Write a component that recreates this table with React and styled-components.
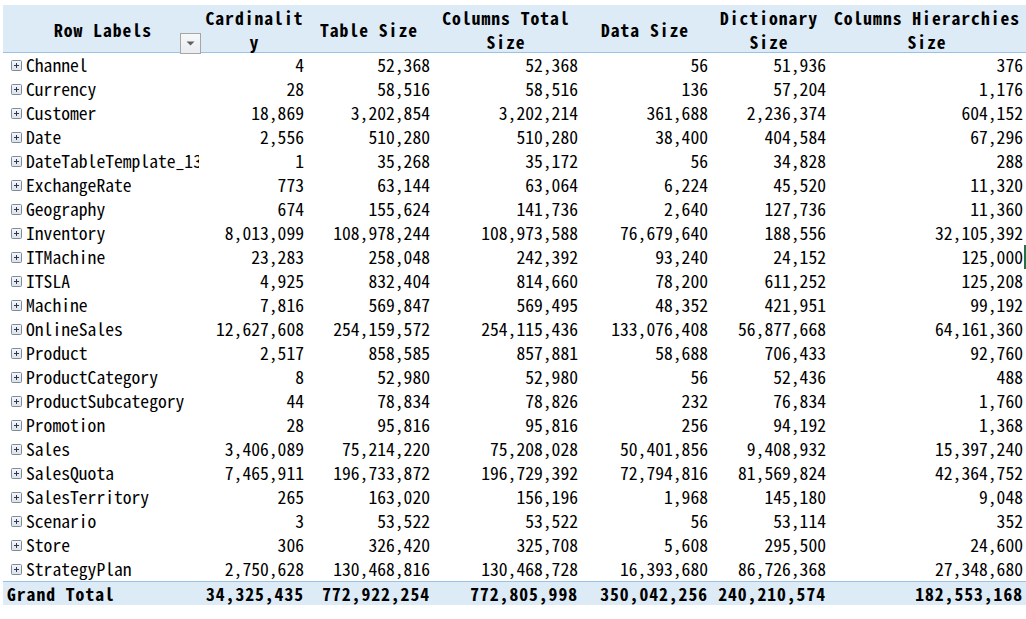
import React from "react";
import styled, { createGlobalStyle } from "styled-components";

const GlobalStyle = createGlobalStyle`
  html, body { margin: 0; padding: 0; background: #ffffff; }
  body {
    font-family: "Noto Sans Mono CJK SC", "Liberation Mono", monospace;
    font-size: 17.6px;
    color: #000000;
  }
`;

const COLS = "200px 103px 126px 148px 130px 118px 198px";

const Sheet = styled.div`
  padding: 5px 0 0 3px;
  width: 1023px;
`;

const HeaderRow = styled.div`
  display: grid;
  grid-template-columns: ${COLS};
  height: 47px;
  background: #ddebf7;
  border-bottom: 1px solid #9bc2e6;
  font-weight: bold;
  letter-spacing: 1px;
`;

const HeaderCell = styled.div`
  position: relative;
  display: flex;
  align-items: center;
  justify-content: center;
  text-align: center;
  padding-top: 1px;
  line-height: 24px;
  white-space: pre-line;
  overflow: visible;
`;

const FilterButton = styled.div`
  position: absolute;
  right: 2px;
  bottom: 0px;
  width: 19px;
  height: 19px;
  border: 1px solid #a6a6a6;
  background: linear-gradient(#f7f8fa, #e9ecf0);
  display: flex;
  align-items: center;
  justify-content: center;
`;

const Row = styled.div`
  display: grid;
  grid-template-columns: ${COLS};
  height: ${(p) => (p.$total ? "23px" : "24px")};
  line-height: ${(p) => (p.$total ? "23px" : "24px")};
  background: ${(p) => (p.$total ? "#ddebf7" : "#ffffff")};
  border-top: ${(p) => (p.$total ? "1px solid #9bc2e6" : "none")};
  font-weight: ${(p) => (p.$total ? "bold" : "normal")};
  letter-spacing: ${(p) => (p.$total ? "1px" : "0")};
`;

const LabelCell = styled.div`
  display: flex;
  align-items: center;
  gap: 4px;
  padding-left: ${(p) => (p.$total ? "4px" : "8px")};
  padding-right: 4px;
  white-space: nowrap;
  min-width: 0;
`;

const LabelText = styled.span`
  overflow: hidden;
  min-width: 0;
  white-space: nowrap;
`;

const NumCell = styled.div`
  text-align: right;
  padding-right: ${(p) => (p.$last ? "3px" : "2px")};
  white-space: nowrap;
  box-shadow: ${(p) => (p.$active ? "inset -2px 0 0 #217346" : "none")};
`;

const ExpandIcon = () => (
  <svg width="11" height="11" viewBox="0 0 11 11" style={{ flex: "none" }}>
    <defs>
      <linearGradient id="eg" x1="0" y1="0" x2="0" y2="1">
        <stop offset="0" stopColor="#f4f6f9" />
        <stop offset="1" stopColor="#dde2ea" />
      </linearGradient>
    </defs>
    <rect x="0.5" y="0.5" width="10" height="10" rx="1" fill="url(#eg)" stroke="#7f8a9c" />
    <path d="M3 5.5h5M5.5 3v5" stroke="#2f3b4c" strokeWidth="1" />
  </svg>
);

const Arrow = () => (
  <svg width="9" height="5" viewBox="0 0 9 5">
    <path d="M0.5 0.5h8L4.5 4.5z" fill="#606060" />
  </svg>
);

const headers = [
  "Row Labels",
  "Cardinalit\ny",
  "Table Size",
  "Columns Total\nSize",
  "Data Size",
  "Dictionary\nSize",
  "Columns Hierarchies\nSize",
];

const rows = [
  ["Channel", "4", "52,368", "52,368", "56", "51,936", "376"],
  ["Currency", "28", "58,516", "58,516", "136", "57,204", "1,176"],
  ["Customer", "18,869", "3,202,854", "3,202,214", "361,688", "2,236,374", "604,152"],
  ["Date", "2,556", "510,280", "510,280", "38,400", "404,584", "67,296"],
  ["DateTableTemplate_13a7", "1", "35,268", "35,172", "56", "34,828", "288"],
  ["ExchangeRate", "773", "63,144", "63,064", "6,224", "45,520", "11,320"],
  ["Geography", "674", "155,624", "141,736", "2,640", "127,736", "11,360"],
  ["Inventory", "8,013,099", "108,978,244", "108,973,588", "76,679,640", "188,556", "32,105,392"],
  ["ITMachine", "23,283", "258,048", "242,392", "93,240", "24,152", "125,000"],
  ["ITSLA", "4,925", "832,404", "814,660", "78,200", "611,252", "125,208"],
  ["Machine", "7,816", "569,847", "569,495", "48,352", "421,951", "99,192"],
  ["OnlineSales", "12,627,608", "254,159,572", "254,115,436", "133,076,408", "56,877,668", "64,161,360"],
  ["Product", "2,517", "858,585", "857,881", "58,688", "706,433", "92,760"],
  ["ProductCategory", "8", "52,980", "52,980", "56", "52,436", "488"],
  ["ProductSubcategory", "44", "78,834", "78,826", "232", "76,834", "1,760"],
  ["Promotion", "28", "95,816", "95,816", "256", "94,192", "1,368"],
  ["Sales", "3,406,089", "75,214,220", "75,208,028", "50,401,856", "9,408,932", "15,397,240"],
  ["SalesQuota", "7,465,911", "196,733,872", "196,729,392", "72,794,816", "81,569,824", "42,364,752"],
  ["SalesTerritory", "265", "163,020", "156,196", "1,968", "145,180", "9,048"],
  ["Scenario", "3", "53,522", "53,522", "56", "53,114", "352"],
  ["Store", "306", "326,420", "325,708", "5,608", "295,500", "24,600"],
  ["StrategyPlan", "2,750,628", "130,468,816", "130,468,728", "16,393,680", "86,726,368", "27,348,680"],
];

const total = ["Grand Total", "34,325,435", "772,922,254", "772,805,998", "350,042,256", "240,210,574", "182,553,168"];

export default function App() {
  return (
    <>
      <GlobalStyle />
      <Sheet>
        <HeaderRow>
          {headers.map((h, i) => (
            <HeaderCell key={i}>
              {h}
              {i === 0 && (
                <FilterButton>
                  <Arrow />
                </FilterButton>
              )}
            </HeaderCell>
          ))}
        </HeaderRow>
        {rows.map((r) => (
          <Row key={r[0]}>
            <LabelCell>
              <ExpandIcon />
              <LabelText>{r[0]}</LabelText>
            </LabelCell>
            {r.slice(1).map((v, i) => (
              <NumCell key={i} $last={i === 5} $active={r[0] === "ITMachine" && i === 5}>
                {v}
              </NumCell>
            ))}
          </Row>
        ))}
        <Row $total>
          <LabelCell $total>
            <LabelText>{total[0]}</LabelText>
          </LabelCell>
          {total.slice(1).map((v, i) => (
            <NumCell key={i} $last={i === 5}>
              {v}
            </NumCell>
          ))}
        </Row>
      </Sheet>
    </>
  );
}
